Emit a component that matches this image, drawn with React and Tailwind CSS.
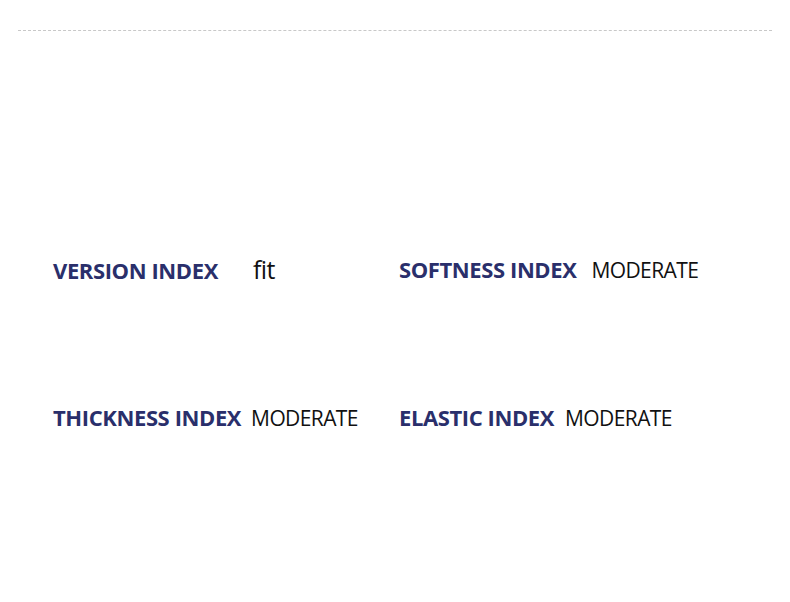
import React from 'react';

const INDEXES = [
    { label: 'VERSION INDEX', value: 'fit', gap: 'ml-[35px]', size: 'text-[25px]' },
    { label: 'SOFTNESS INDEX', value: 'MODERATE', gap: 'ml-[15px]', size: 'text-[21px]' },
    { label: 'THICKNESS INDEX', value: 'MODERATE', gap: 'ml-[10px]', size: 'text-[21px]' },
    { label: 'ELASTIC INDEX', value: 'MODERATE', gap: 'ml-[11px]', size: 'text-[21px]' },
];

function IndexRow({ item }) {
    return (
        <div className="flex items-baseline h-[30px]">
            <span className="text-[22px] font-bold text-[#2a2f6b] tracking-[-0.4px] leading-[30px]">{item.label}</span>
            <span className={`${item.gap} ${item.size} text-[#111] tracking-[-0.6px] leading-[30px]`}>{item.value}</span>
        </div>
    );
}

export default function App() {
    return (
        <div className="w-[790px] h-[602px] bg-white overflow-hidden" style={{ fontFamily: '"Open Sans", "Noto Sans", sans-serif' }}>
            <div className="pt-[30px] px-[18px]">
                <div className="border-t border-dashed border-[#c8c8c8]" />
            </div>
            <div className="grid grid-cols-[346px_1fr] gap-y-[118px] pl-[53px] pt-[223px]">
                {INDEXES.map((item) => (
                    <IndexRow key={item.label} item={item} />
                ))}
            </div>
        </div>
    );
}
